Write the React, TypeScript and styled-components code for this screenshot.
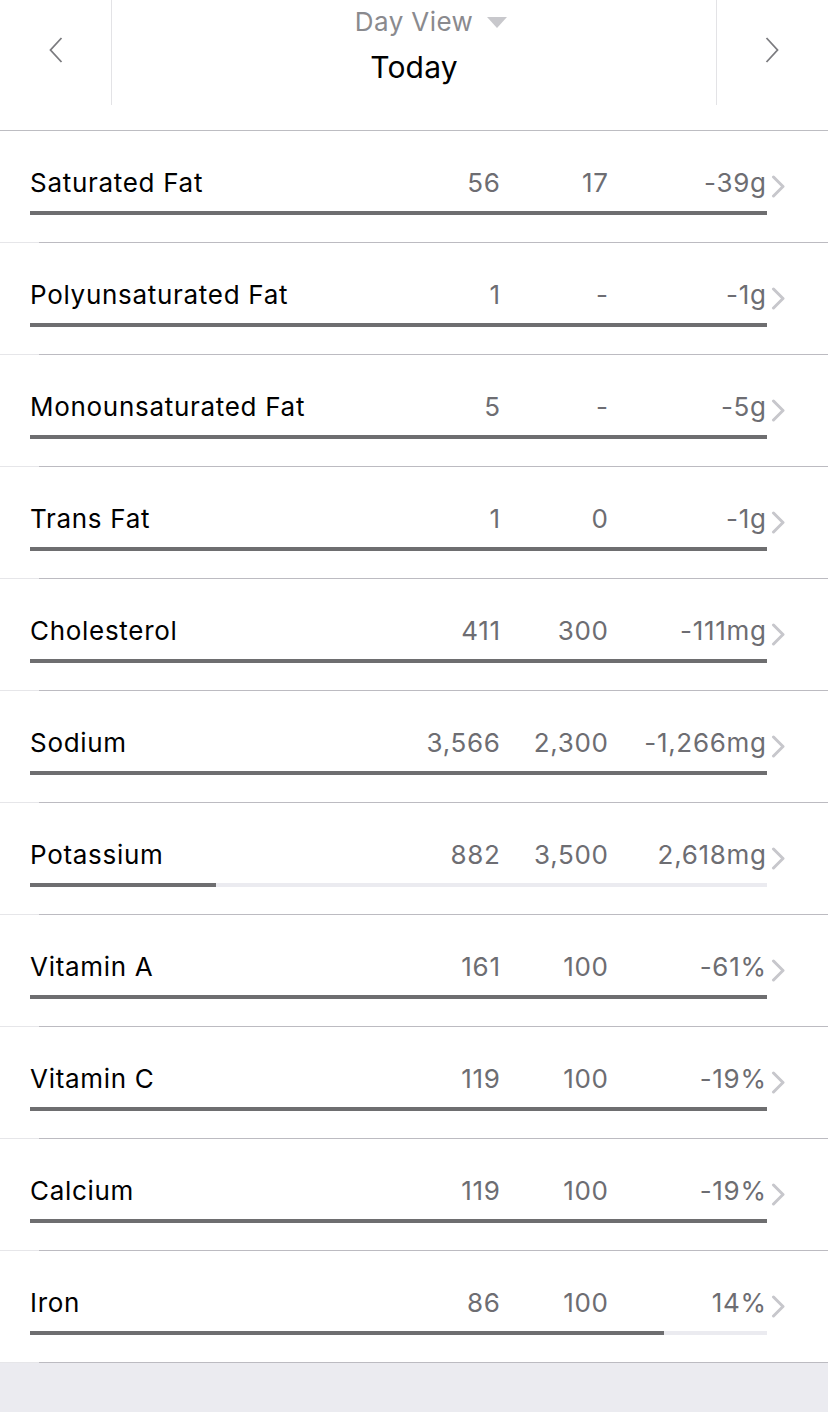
import React from "react";
import styled, { createGlobalStyle } from "styled-components";

const GlobalStyle = createGlobalStyle`
  html, body {
    margin: 0;
    padding: 0;
    background: #ffffff;
  }
  body {
    font-family: Inter, "Liberation Sans", Arial, sans-serif;
    -webkit-font-smoothing: antialiased;
  }
`;

type Nutrient = {
  name: string;
  total: string;
  goal: string;
  left: string;
  fill: number;
};

const nutrients: Nutrient[] = [
  { name: "Saturated Fat", total: "56", goal: "17", left: "-39g", fill: 1 },
  { name: "Polyunsaturated Fat", total: "1", goal: "-", left: "-1g", fill: 1 },
  { name: "Monounsaturated Fat", total: "5", goal: "-", left: "-5g", fill: 1 },
  { name: "Trans Fat", total: "1", goal: "0", left: "-1g", fill: 1 },
  { name: "Cholesterol", total: "411", goal: "300", left: "-111mg", fill: 1 },
  { name: "Sodium", total: "3,566", goal: "2,300", left: "-1,266mg", fill: 1 },
  { name: "Potassium", total: "882", goal: "3,500", left: "2,618mg", fill: 882 / 3500 },
  { name: "Vitamin A", total: "161", goal: "100", left: "-61%", fill: 1 },
  { name: "Vitamin C", total: "119", goal: "100", left: "-19%", fill: 1 },
  { name: "Calcium", total: "119", goal: "100", left: "-19%", fill: 1 },
  { name: "Iron", total: "86", goal: "100", left: "14%", fill: 0.86 },
];

const Page = styled.div`
  width: 828px;
  min-height: 1412px;
  display: flex;
  flex-direction: column;
  background: #ebebf0;
`;

const Header = styled.header`
  display: grid;
  grid-template-columns: 111px 1fr 111px;
  align-items: start;
  height: 130px;
  background: #ffffff;
  border-bottom: 1px solid #bdbdc2;
`;

type Side = { $side: "left" | "right" };

const NavButton = styled.button<Side>`
  height: 100px;
  padding: 0;
  border: none;
  background: transparent;
  display: flex;
  align-items: center;
  justify-content: ${(p) => (p.$side === "left" ? "flex-start" : "flex-end")};
  padding-left: ${(p) => (p.$side === "left" ? "49px" : "0")};
  padding-right: ${(p) => (p.$side === "right" ? "49px" : "0")};
  cursor: pointer;
`;

const TitleBlock = styled.div`
  height: 105px;
  border-left: 1px solid #e3e3e6;
  border-right: 1px solid #e3e3e6;
  display: flex;
  flex-direction: column;
  align-items: center;
`;

const ViewPicker = styled.div`
  display: flex;
  align-items: center;
  gap: 14px;
  margin-top: 6px;
  margin-left: 34px;
  font-size: 26px;
  line-height: 32px;
  color: #8a8a8e;
  letter-spacing: 0.4px;
`;

const DateTitle = styled.div`
  margin-top: 12px;
  font-size: 30px;
  line-height: 34px;
  color: #000000;
  letter-spacing: 0.2px;
`;

const List = styled.div`
  display: flex;
  flex-direction: column;
  background: #ffffff;
`;

const Row = styled.div`
  display: grid;
  grid-template-columns: 1fr 110px 108px 158px 62px;
  grid-template-rows: 32px 4px;
  row-gap: 12px;
  padding: 36px 0 27px 30px;
  border-bottom: 1px solid transparent;
  border-image: linear-gradient(to right, #e6e6e9 40px, #bcbbc1 40px) 1;
`;

const Label = styled.span`
  font-size: 26px;
  line-height: 32px;
  color: #000000;
  letter-spacing: 0.7px;
  white-space: nowrap;
`;

const Value = styled.span`
  font-size: 26px;
  line-height: 32px;
  color: #6d6d72;
  text-align: right;
  letter-spacing: 0.7px;
  margin-right: -0.7px;
  white-space: nowrap;
`;

const Disclosure = styled.span`
  display: flex;
  align-items: center;
  padding-left: 5px;
  padding-top: 6px;
`;

const Track = styled.div`
  grid-column: 1 / 5;
  margin-right: -1px;
  height: 4px;
  background: #ebebf0;
  display: flex;
`;

const Fill = styled.div`
  height: 100%;
  background: #6e6e70;
`;

const Footer = styled.div`
  flex: 1;
  background: #ebebf0;
`;

const ChevronLeft = () => (
  <svg width="14" height="26" viewBox="0 0 14 26" aria-hidden="true">
    <polyline points="12.5,1 1.5,13 12.5,25" fill="none" stroke="#7b7b7f" strokeWidth="1.8" strokeLinejoin="miter" />
  </svg>
);

const ChevronRight = () => (
  <svg width="14" height="26" viewBox="0 0 14 26" aria-hidden="true">
    <polyline points="1.5,1 12.5,13 1.5,25" fill="none" stroke="#7b7b7f" strokeWidth="1.8" strokeLinejoin="miter" />
  </svg>
);

const Caret = () => (
  <svg width="20" height="11" viewBox="0 0 20 11" aria-hidden="true">
    <polygon points="0,0 20,0 10,11" fill="#c8c8cc" />
  </svg>
);

const RowChevron = () => (
  <svg width="15" height="23" viewBox="0 0 15 23" aria-hidden="true">
    <polyline points="2.5,2 12,11.5 2.5,21" fill="none" stroke="#c7c7cc" strokeWidth="3" strokeLinecap="round" strokeLinejoin="round" />
  </svg>
);

export default function App() {
  return (
    <>
      <GlobalStyle />
      <Page>
        <Header>
          <NavButton $side="left" aria-label="Previous day">
            <ChevronLeft />
          </NavButton>
          <TitleBlock>
            <ViewPicker>
              <span>Day View</span>
              <Caret />
            </ViewPicker>
            <DateTitle>Today</DateTitle>
          </TitleBlock>
          <NavButton $side="right" aria-label="Next day">
            <ChevronRight />
          </NavButton>
        </Header>
        <List>
          {nutrients.map((n) => (
            <Row key={n.name}>
              <Label>{n.name}</Label>
              <Value>{n.total}</Value>
              <Value>{n.goal}</Value>
              <Value>{n.left}</Value>
              <Disclosure>
                <RowChevron />
              </Disclosure>
              <Track>
                <Fill style={{ width: `${Math.min(1, n.fill) * 100}%` }} />
              </Track>
            </Row>
          ))}
        </List>
        <Footer />
      </Page>
    </>
  );
}
